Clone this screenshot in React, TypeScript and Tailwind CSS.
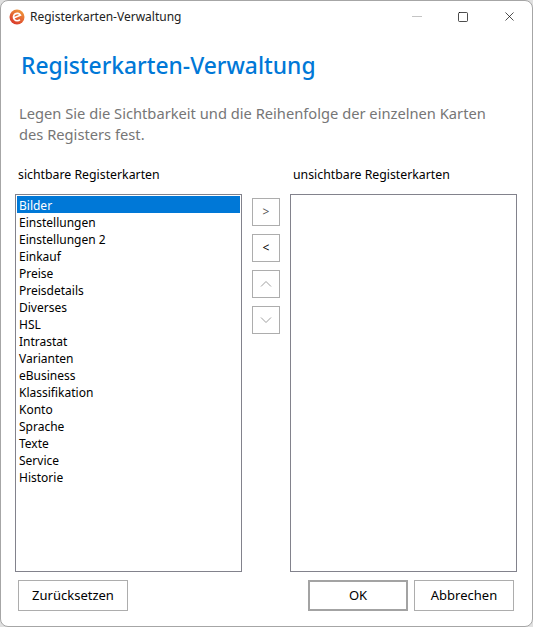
import { Square, X } from 'lucide-react';

const items = [
  'Bilder', 'Einstellungen', 'Einstellungen 2', 'Einkauf', 'Preise', 'Preisdetails', 'Diverses', 'HSL', 'Intrastat',
  'Varianten', 'eBusiness', 'Klassifikation', 'Konto', 'Sprache', 'Texte', 'Service', 'Historie',
];

const moveButton = 'w-[28px] h-[28px] border border-[#adadad] bg-white flex items-center justify-center';

export default function App() {
  return (
    <div className="w-[533px] h-[627px] bg-[#e0e0e0] font-['Noto_Sans',sans-serif] text-[12px] text-black overflow-hidden">
      <div className="w-full h-full bg-white border border-[#a6a6a6] rounded-[8px] flex flex-col">
        {/* title bar */}
        <div className="h-[31px] shrink-0 flex items-center pl-[8px]">
          <svg width="16" height="16" viewBox="0 0 16 16" className="shrink-0">
            <defs>
              <linearGradient id="logo" x1="0.8" y1="0" x2="0.2" y2="1">
                <stop offset="0" stopColor="#f09a3a" />
                <stop offset="1" stopColor="#d9342b" />
              </linearGradient>
            </defs>
            <circle cx="8" cy="8" r="7.5" fill="url(#logo)" />
            <path d="M4.6 9 L11.4 6.2 A3.7 3.7 0 1 0 10.9 10.6" fill="none" stroke="#fff" strokeWidth="1.7" />
          </svg>
          <span className="ml-[5px] text-[#222]">Registerkarten-Verwaltung</span>
          <div className="ml-auto flex items-center">
            <div className="w-[46px] flex justify-center">
              <div className="w-[10px] h-px bg-[#c4c4c4]" />
            </div>
            <div className="w-[46px] flex justify-center"><Square size={12} strokeWidth={1.4} /></div>
            <div className="w-[46px] flex justify-center"><X size={15} strokeWidth={1.1} /></div>
          </div>
        </div>

        <h1 className="ml-[20px] mt-[17px] text-[22.8px] leading-[34px] font-medium text-[#0078d7]">Registerkarten-Verwaltung</h1>
        <p className="ml-[18px] mt-[20px] w-[490px] text-[14.7px] leading-[21px] text-[#767676]">
          Legen Sie die Sichtbarkeit und die Reihenfolge der einzelnen Karten des Registers fest.
        </p>

        {/* lists */}
        <div className="ml-[14px] mt-[19px] flex">
          <div className="w-[227px]">
            <div className="h-[20px] ml-[3px] leading-[22px] text-[12.3px]">sichtbare Registerkarten</div>
            <div className="mt-[10px] h-[378px] border border-[#82828c] p-[1px]">
              {items.map((item, i) => (
                <div
                  key={item}
                  className={i === 0 ? 'h-[17px] leading-[19px] pl-[2px] bg-[#0078d7] text-white' : 'h-[17px] leading-[19px] pl-[2px]'}
                >
                  {item}
                </div>
              ))}
            </div>
          </div>

          <div className="w-[48px] pt-[34px] pl-[10px] flex flex-col gap-[8px]">
            <button className={`${moveButton} text-[#555]`}>&gt;</button>
            <button className={moveButton}>&lt;</button>
            <button className={moveButton}>
              <svg width="12" height="8" viewBox="0 0 12 8" fill="none" stroke="#a0a0a0" strokeWidth="1">
                <path d="M1 6.5 L6 1.5 L11 6.5" />
              </svg>
            </button>
            <button className={moveButton}>
              <svg width="12" height="8" viewBox="0 0 12 8" fill="none" stroke="#a0a0a0" strokeWidth="1">
                <path d="M1 1.5 L6 6.5 L11 1.5" />
              </svg>
            </button>
          </div>

          <div className="w-[227px]">
            <div className="h-[20px] ml-[3px] leading-[22px] text-[12.3px]">unsichtbare Registerkarten</div>
            <div className="mt-[10px] h-[378px] border border-[#82828c]" />
          </div>
        </div>

        {/* footer */}
        <div className="mt-[8px] ml-[17px] mr-[18px] flex gap-[6px]">
          <button className="w-[110px] h-[31px] border border-[#adadad] text-[13px] mr-auto">Zurücksetzen</button>
          <button className="w-[100px] h-[31px] border-2 border-[#a3a3a3] text-[13px]">OK</button>
          <button className="w-[100px] h-[31px] border border-[#adadad] text-[13px]">Abbrechen</button>
        </div>
      </div>
    </div>
  );
}
